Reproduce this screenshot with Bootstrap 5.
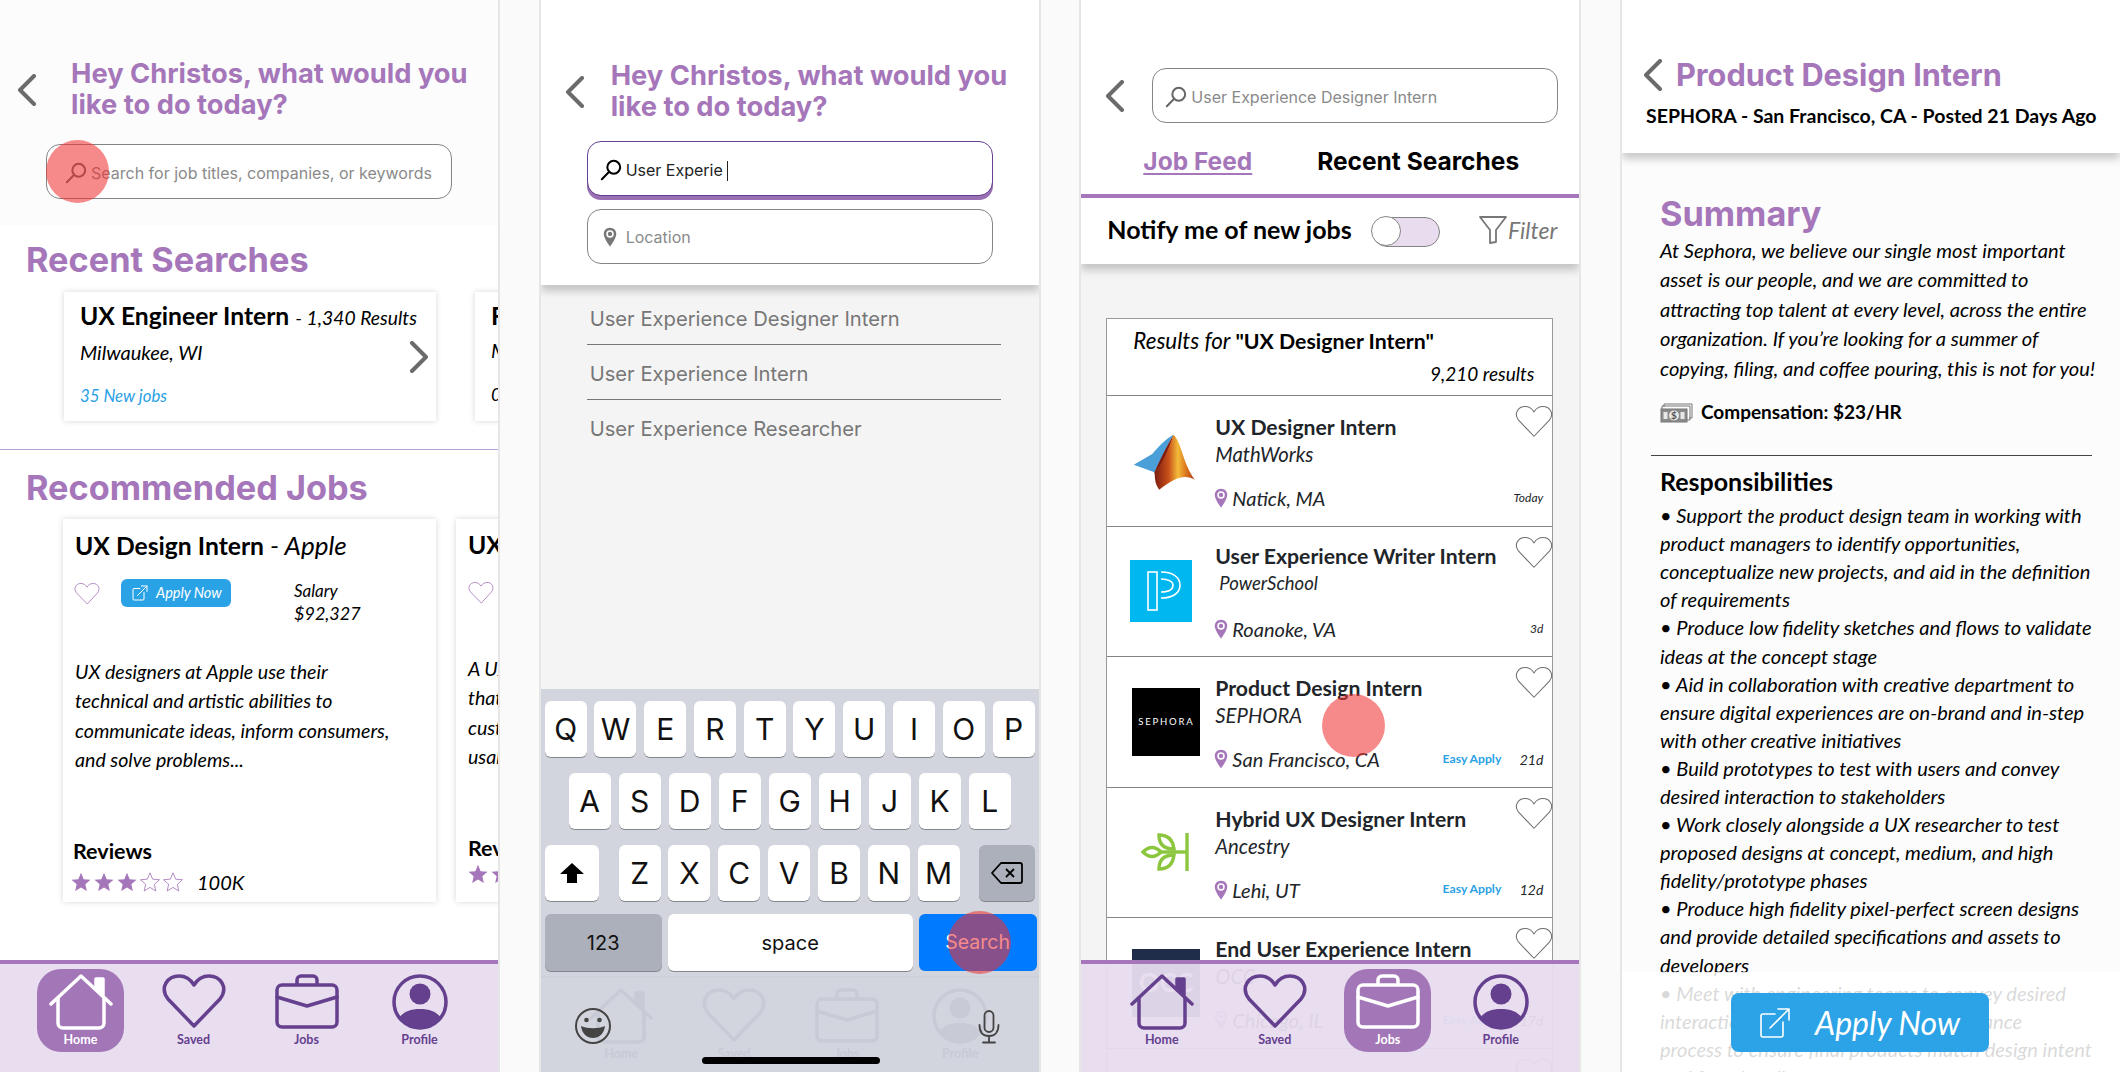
<!DOCTYPE html>
<html lang="en">

<head>
  <meta charset="UTF-8">
  <meta name="viewport" content="width=device-width, initial-scale=1.0">
  <title>Job search screens</title>
  <link href="https://cdn.jsdelivr.net/npm/bootstrap@5.3.0/dist/css/bootstrap.min.css" rel="stylesheet">
  <style>
    body {
      background-color: #fafafa;
      font-family: "Lato", "Liberation Sans", sans-serif;
      color: #000;
      overflow: hidden;
    }

    .screens {
      width: 2120px;
      height: 1072px;
    }

    .phone {
      width: 498px;
      height: 1072px;
      overflow: hidden;
      background-color: #fff;
      box-shadow: 0 0 0 2px #e6e6e6;
      font-size: 18px;
    }

    .phone-grey {
      background-color: #f4f4f4;
    }

    .phone-soft {
      background-color: #fcfcfc;
    }

    /* shared text */
    .mont {
      font-family: "Inter", "Liberation Sans", sans-serif;
    }

    .hero {
      color: #a576b9;
      font-family: "Inter", "Liberation Sans", sans-serif;
      font-weight: 700;
      font-size: 27.3px;
      line-height: 30.5px;
      white-space: nowrap;
    }

    .sect-title {
      color: #a576b9;
      font-family: "Inter", "Liberation Sans", sans-serif;
      font-weight: 700;
      font-size: 34.3px;
      line-height: 40px;
      white-space: nowrap;
      margin: 0;
    }

    .chev {
      width: 20px;
      height: 32px;
      flex: none;
      fill: none;
      stroke: #6b6b6b;
      stroke-width: 4;
      stroke-linecap: round;
      stroke-linejoin: round;
    }

    .line-icn {
      fill: none;
      stroke: currentColor;
      stroke-linecap: round;
      stroke-linejoin: round;
    }

    /* search boxes */
    .srch {
      width: 406px;
      height: 55px;
      padding: 2px 0 0 18px;
      border: 1.5px solid #858585;
      border-radius: 14px;
      font-family: "Inter", "Liberation Sans", sans-serif;
      font-size: 16px;
      color: #8a8a8a;
      background-color: #fff;
      white-space: nowrap;
    }

    .srch-tight {
      padding-left: 12px;
    }

    .srch-on {
      border-color: #67418f;
      color: #222;
      box-shadow: 0 4px 0 #9a70b5;
    }

    .srch-icn {
      width: 22px;
      height: 22px;
      flex: none;
      stroke-width: 2.2;
      color: #666;
    }

    .caret-bar {
      display: inline-block;
      width: 1px;
      height: 20px;
      background-color: #222;
      margin-left: 4px;
      vertical-align: middle;
    }

    /* cards of the home screen */
    .slide-card {
      flex: none;
      border: 0;
      border-radius: 0;
      box-shadow: 0 0 6px rgba(0, 0, 0, .16);
      background-color: #fff;
    }

    .recent-card {
      width: 372px;
      height: 129px;
      padding: 9px 0 0 16px;
    }

    .rec-card {
      width: 373px;
      height: 383px;
      padding: 11px 0 0 12px;
    }

    .cut-title {
      font-weight: 700;
      font-size: 24.7px;
      line-height: 30px;
      white-space: nowrap;
    }

    .cut-title i {
      font-weight: 400;
    }

    .cut-title .note {
      font-size: 19.3px;
    }

    .blue-link {
      color: #2aa1e6;
      font-style: italic;
      font-size: 16.8px;
      line-height: 22px;
    }

    .ital {
      font-style: italic;
      white-space: nowrap;
    }

    .city-line {
      font-size: 20px;
      line-height: 25px;
      margin-top: 7px;
    }

    .apply-small {
      width: 110px;
      height: 28px;
      padding: 0 0 0 11px;
      border: 0;
      border-radius: 6px;
      background-color: #2aa3e6;
      color: #fff;
      font-style: italic;
      font-size: 14.5px;
    }

    .star {
      width: 20px;
      height: 20px;
      margin-right: 3px;
      color: #a576b9;
      fill: #a576b9;
      flex: none;
    }

    .star-off {
      fill: none;
      stroke: #a576b9;
      stroke-width: 1;
    }

    .reviews-title {
      font-weight: 700;
      font-size: 21.5px;
      line-height: 26px;
    }

    /* bottom tabs */
    .tabbar {
      left: 0;
      right: 0;
      top: 960px;
      height: 112px;
      padding: 5px 0 0 24px;
      border-top: 4px solid #a576b9;
      background-color: rgba(232, 220, 238, .95);
      color: #65408f;
      z-index: 3;
    }

    .tab-item {
      width: 113px;
    }

    .tab-tile {
      width: 87px;
      height: 83px;
      padding-top: 5px;
      border-radius: 24px;
      font-weight: 700;
      font-size: 12.5px;
      line-height: 18px;
    }

    .tab-tile svg {
      width: 64px;
      height: 56px;
      stroke-width: 3.5;
      margin-bottom: 1px;
    }

    .tab-on {
      background-color: #a376b8;
      color: #fff;
    }

    .tabbar-ghost {
      top: 976px;
      border-top: 2px solid #ccd0d9;
      background-color: transparent;
      color: #c8cad6;
      z-index: 1;
    }

    /* keyboard */
    .kbd-panel {
      left: 0;
      right: 0;
      bottom: 0;
      height: 383px;
      padding-top: 12px;
      background-color: #d2d5dd;
      font-family: "Inter", "Liberation Sans", sans-serif;
    }

    .kbd-row {
      height: 56px;
      margin-bottom: 16px;
      position: relative;
      z-index: 2;
    }

    .kbd-key {
      width: 42px;
      height: 56px;
      background-color: #fff;
      border-radius: 6px;
      box-shadow: 0 1px 0 #85868b;
      font-size: 30px;
      color: #111;
    }

    .kbd-wide {
      font-size: 20px;
      height: 57px;
    }

    .kbd-dark {
      background-color: #abb0ba;
    }

    .kbd-go {
      background-color: #007aff;
      color: #fff;
      box-shadow: none;
    }

    .home-bar {
      left: 161px;
      bottom: 8px;
      width: 178px;
      height: 7px;
      border-radius: 4px;
      background-color: #000;
      z-index: 2;
    }

    .suggest {
      width: 414px;
      margin-left: 46px;
    }

    .suggest-item {
      height: 55px;
      padding: 9px 0 0 3px;
      border: 0;
      border-bottom: 1.5px solid #777;
      border-radius: 0;
      background-color: transparent;
      color: #777;
      font-family: "Inter", "Liberation Sans", sans-serif;
      font-size: 20.2px;
      line-height: 40px;
      white-space: nowrap;
    }

    .suggest-item:last-child {
      border-bottom: 0;
    }

    /* panel shadow under the top blocks */
    .top-block {
      background-color: #fff;
      box-shadow: 0 6px 8px rgba(0, 0, 0, .2);
      position: relative;
    }

    /* job feed */
    .feed-tabs {
      height: 74px;
      padding-top: 22px;
      border-bottom: 4px solid #a576b9;
      font-family: "Inter", "Liberation Sans", sans-serif;
      font-weight: 700;
      font-size: 24.5px;
      line-height: 30px;
      margin-top: 1px;
    }

    .feed-on {
      color: #a576b9;
      text-decoration: underline;
      text-underline-offset: 3px;
      margin-left: 62px;
      margin-right: 65px;
    }

    .notify-row {
      height: 67px;
      padding: 0 22px 3px 26px;
    }

    .notify-text {
      font-weight: 700;
      font-size: 25px;
      white-space: nowrap;
    }

    .fake-toggle {
      width: 68px;
      height: 30px;
      margin: 3px 0 0 20px;
      border: 1.5px solid #858585;
      border-radius: 15px;
      background-color: #e8dcee;
    }

    .toggle-knob {
      width: 30px;
      height: 30px;
      margin: -1.5px 0 0 -1.5px;
      border: 1.5px solid #858585;
      border-radius: 50%;
      background-color: #fff;
    }

    .filter-text {
      color: #777;
      font-style: italic;
      font-size: 23px;
    }

    .results-box {
      width: 447px;
      margin: 54px 0 0 25px;
      border: 1px solid #999;
      border-bottom: 0;
      border-radius: 0;
      background-color: #fff;
    }

    .results-head {
      height: 76px;
      padding: 6px 18px 0 26px;
      font-size: 19px;
      line-height: 32px;
    }

    .results-for {
      font-size: 22.4px;
    }

    .results-q {
      font-size: 21.3px;
    }

    .list-group-item.job-row {
      height: 130.5px;
      padding: 0;
      border: 0;
      border-top: 1.5px solid #858585;
      border-radius: 0;
    }

    .job-logo {
      width: 108px;
      flex: none;
      padding-left: 24px;
    }

    .job-body {
      padding-top: 17px;
    }

    .job-body-high {
      padding-top: 15px;
    }

    .job-name {
      font-weight: 700;
      font-size: 21.2px;
      line-height: 28px;
      white-space: nowrap;
    }

    .job-co {
      font-style: italic;
      font-size: 20.3px;
      line-height: 26px;
    }

    .job-meta {
      width: 330px;
      height: 28px;
      margin-top: 17px;
      font-style: italic;
      font-size: 20px;
    }

    .job-body-high .job-meta {
      margin-top: 19px;
    }

    .job-pin {
      width: 16px;
      height: 20px;
      margin: 0 3px 0 -2px;
      flex: none;
      color: #a576b9;
    }

    .easy {
      color: #2aa1e6;
      font-style: normal;
      font-weight: 700;
      font-size: 12.2px;
    }

    .age {
      width: 44px;
      padding-right: 2px;
      text-align: right;
      font-size: 12px;
    }

    .age-big {
      font-size: 14px;
    }

    .job-heart {
      top: 9px;
      right: -1px;
      width: 38px;
      height: 34px;
      color: #6f6f6f;
      stroke-width: 1.8;
    }

    .sephora-word {
      color: #fff;
      font-size: 9.5px;
      letter-spacing: 1.8px;
    }

    .occ-word {
      color: #fff;
      font-weight: 700;
      font-size: 26px;
    }

    /* job detail */
    .detail-head {
      height: 153px;
      padding: 59px 0 0 21px;
    }

    .detail-title {
      color: #a576b9;
      font-family: "Inter", "Liberation Sans", sans-serif;
      font-weight: 700;
      font-size: 30.7px;
      line-height: 32px;
      margin-left: -3px;
      white-space: nowrap;
    }

    .detail-sub {
      margin-top: 11px;
      margin-left: 3px;
      font-weight: 700;
      font-size: 19.5px;
      line-height: 28px;
      white-space: nowrap;
    }

    .detail-body {
      padding: 41px 0 0 38px;
    }

    .long-text {
      font-style: italic;
      font-size: 20.1px;
      line-height: 29.4px;
      white-space: nowrap;
      margin: 0;
    }

    .card-text-size {
      font-size: 19.6px;
    }

    .long-tight {
      line-height: 28.1px;
    }

    .comp-line {
      margin-top: 15px;
      font-weight: 700;
      font-size: 19px;
      line-height: 28px;
      white-space: nowrap;
    }

    .rule-dark {
      width: 441px;
      margin: 29px 0 10px -9px;
      border-top: 1.5px solid #444;
      opacity: 1;
    }

    .resp-title {
      font-weight: 700;
      font-size: 25px;
      line-height: 30px;
      margin: 0 0 5px;
    }

    .fade-over {
      left: 0;
      right: 0;
      top: 972px;
      bottom: 0;
      background-color: rgba(255, 255, 255, .85);
    }

    .apply-big {
      left: 109px;
      top: 21px;
      width: 258px;
      height: 59px;
      padding: 0 0 0 28px;
      border: 0;
      border-radius: 8px;
      background-color: #2ba3e6;
      color: #fff;
      font-style: italic;
      font-size: 32px;
      white-space: nowrap;
    }

    .tap-dot {
      width: 63px;
      height: 63px;
      border-radius: 50%;
      background-color: rgba(240, 50, 50, .57);
      z-index: 5;
    }
  </style>
</head>

<body>
  <svg width="0" height="0" class="position-absolute">
    <symbol id="i-home" viewBox="0 0 64 56">
      <path d="M2 30 L32 2 L62 30" />
      <path d="M9 24 V49 a5 5 0 0 0 5 5 H50 a5 5 0 0 0 5-5 V24" />
      <path d="M47 5 h7 v16 l-7 -6 Z" fill="currentColor" />
    </symbol>
    <symbol id="i-heart" viewBox="0 0 64 56">
      <path d="M32 52 L6 25 C-3 13 6 2 17 2 C24 2 29 6 32 11 C35 6 40 2 47 2 C58 2 67 13 58 25 Z" />
    </symbol>
    <symbol id="i-bag" viewBox="0 0 64 56">
      <rect x="2" y="11" width="60" height="42" rx="5" />
      <path d="M22 10 V6 a4 4 0 0 1 4-4 h12 a4 4 0 0 1 4 4 v4" />
      <path d="M2 23 L32 32 L62 23" />
    </symbol>
    <symbol id="i-user" viewBox="0 0 64 56">
      <circle cx="32" cy="28" r="26" />
      <circle cx="32" cy="20" r="10.5" fill="currentColor" stroke="none" />
      <path d="M11 44 C16 37 23 35 32 35 C41 35 48 37 53 44 A26 26 0 0 1 11 44 Z" fill="currentColor" stroke="none" />
    </symbol>
    <symbol id="i-glass" viewBox="0 0 24 24">
      <circle cx="15" cy="9" r="7" />
      <path d="M10 14 L2 22" />
    </symbol>
    <symbol id="i-pin" viewBox="0 0 24 32">
      <path d="M12 1 C6 1 2 5.5 2 11 C2 18 12 31 12 31 C12 31 22 18 22 11 C22 5.5 18 1 12 1 Z" fill="currentColor" stroke="none" />
      <circle cx="12" cy="11" r="6" fill="#fff" stroke="none" />
      <circle cx="12" cy="11" r="3.5" fill="currentColor" stroke="none" />
    </symbol>
    <symbol id="i-ext" viewBox="0 0 32 32">
      <path d="M16 7 H4 a2 2 0 0 0-2 2 V28 a2 2 0 0 0 2 2 H22 a2 2 0 0 0 2-2 V15" />
      <path d="M11 21 L30 2 M19 2 H30 V13" />
    </symbol>
    <symbol id="i-star" viewBox="0 0 24 24">
      <path d="M12 1 L15.2 8.6 L23.4 9.3 L17.2 14.7 L19 22.8 L12 18.5 L5 22.8 L6.8 14.7 L.6 9.3 L8.8 8.6 Z" />
    </symbol>
    <linearGradient id="peak" x1="0" y1="0" x2="1" y2="0">
      <stop offset="0" stop-color="#7c1c10" />
      <stop offset=".35" stop-color="#c9501a" />
      <stop offset=".58" stop-color="#f3bb3a" />
      <stop offset=".8" stop-color="#d9701c" />
      <stop offset="1" stop-color="#a83c16" />
    </linearGradient>
  </svg>

  <div class="screens d-flex justify-content-between">

    <!-- Home screen -->
    <section class="phone position-relative">
      <div class="phone-soft" style="height: 225px">
        <div class="d-flex align-items-center" style="padding: 59px 0 0 17px">
          <svg class="chev" viewBox="0 0 20 32"><path d="M17 2 L3 16 L17 30" /></svg>
          <div class="hero" style="margin-left: 34px">Hey Christos, what would you<br>like to do today?</div>
        </div>
        <div class="srch form-control d-flex align-items-center gap-1" style="margin: 24px 0 0 46px">
          <svg class="srch-icn line-icn"><use href="#i-glass" /></svg>
          <span>Search for job titles, companies, or keywords</span>
        </div>
      </div>

      <h2 class="sect-title" style="margin: 15px 0 12px 26px">Recent Searches</h2>
      <div class="d-flex" style="padding-left: 64px; gap: 39px">
        <div class="card slide-card recent-card position-relative">
          <div class="cut-title">UX Engineer Intern <i class="note">- 1,340 Results</i></div>
          <div class="ital city-line">Milwaukee, WI</div>
          <div class="blue-link" style="margin-top: 20px">35 New jobs</div>
          <svg class="chev position-absolute" style="right: 7px; top: 49px" viewBox="0 0 20 32"><path d="M3 2 L17 16 L3 30" /></svg>
        </div>
        <div class="card slide-card recent-card">
          <div class="cut-title">Front End</div>
          <div class="ital city-line">Milwaukee, WI</div>
          <div class="ital" style="margin-top: 20px; line-height: 22px">0 New jobs</div>
        </div>
      </div>

      <div style="margin-top: 28px; border-top: 1px solid #b79fd0"></div>
      <h2 class="sect-title" style="margin: 18px 0 11px 26px">Recommended Jobs</h2>
      <div class="d-flex" style="padding-left: 63px; gap: 20px">
        <div class="card slide-card rec-card">
          <div class="cut-title">UX Design Intern <i style="font-size: 26px">- Apple</i></div>
          <div class="d-flex" style="margin-top: 18px; height: 48px">
            <svg class="line-icn" width="26" height="24" style="color: #a576b9; stroke-width: 2; margin: 3px 0 0 -1px"><use href="#i-heart" /></svg>
            <button class="btn apply-small d-flex align-items-center gap-2" style="margin-left: 21px">
              <svg class="line-icn" width="16" height="16" style="stroke-width: 2"><use href="#i-ext" /></svg>Apply Now
            </button>
            <div class="ital" style="margin-left: 63px; font-size: 17px; line-height: 22px; padding-top: 1px">Salary<br><span style="font-size: 18px">$92,327</span></div>
          </div>
          <p class="long-text card-text-size" style="margin-top: 30px">UX designers at Apple use their<br>technical and artistic abilities to<br>communicate ideas, inform consumers,<br>and solve problems...</p>
          <div class="reviews-title" style="margin: 63px 0 0 -2px">Reviews</div>
          <div class="d-flex align-items-center" style="margin: 3px 0 0 -4px">
            <svg class="star"><use href="#i-star" /></svg>
            <svg class="star"><use href="#i-star" /></svg>
            <svg class="star"><use href="#i-star" /></svg>
            <svg class="star star-off"><use href="#i-star" /></svg>
            <svg class="star star-off"><use href="#i-star" /></svg>
            <span class="ital" style="font-size: 20px; margin-left: 11px">100K</span>
          </div>
        </div>
        <div class="card slide-card rec-card">
          <div class="cut-title">UX Designer</div>
          <div class="d-flex" style="margin-top: 18px; height: 48px">
            <svg class="line-icn" width="26" height="24" style="color: #a576b9; stroke-width: 2; margin: 3px 0 0 0"><use href="#i-heart" /></svg>
          </div>
          <p class="long-text card-text-size" style="margin-top: 28px">A UX designer<br>that creates<br>customer<br>usable</p>
          <div class="reviews-title" style="margin-top: 63px">Reviews</div>
          <div class="d-flex align-items-center" style="margin-top: 3px">
            <svg class="star"><use href="#i-star" /></svg>
            <svg class="star"><use href="#i-star" /></svg>
          </div>
        </div>
      </div>

      <div class="tabbar position-absolute d-flex">
        <div class="tab-item d-flex justify-content-center"><div class="tab-tile tab-on d-flex flex-column align-items-center"><svg class="line-icn"><use href="#i-home" /></svg>Home</div></div>
        <div class="tab-item d-flex justify-content-center"><div class="tab-tile d-flex flex-column align-items-center"><svg class="line-icn"><use href="#i-heart" /></svg>Saved</div></div>
        <div class="tab-item d-flex justify-content-center"><div class="tab-tile d-flex flex-column align-items-center"><svg class="line-icn"><use href="#i-bag" /></svg>Jobs</div></div>
        <div class="tab-item d-flex justify-content-center"><div class="tab-tile d-flex flex-column align-items-center"><svg class="line-icn"><use href="#i-user" /></svg>Profile</div></div>
      </div>
      <div class="tap-dot position-absolute" style="left: 46px; top: 140px"></div>
    </section>

    <!-- Typing a search -->
    <section class="phone phone-grey position-relative">
      <div class="top-block" style="height: 285px; padding-top: 61px">
        <div class="d-flex align-items-center" style="padding-left: 24px">
          <svg class="chev" viewBox="0 0 20 32"><path d="M17 2 L3 16 L17 30" /></svg>
          <div class="hero" style="margin-left: 26px">Hey Christos, what would you<br>like to do today?</div>
        </div>
        <div class="srch srch-on srch-tight form-control d-flex align-items-center gap-1" style="margin: 19px 0 0 46px">
          <svg class="srch-icn line-icn" style="color: #000"><use href="#i-glass" /></svg>
          <span>User Experie<span class="caret-bar"></span></span>
        </div>
        <div class="srch srch-tight form-control d-flex align-items-center" style="margin: 13px 0 0 46px; padding-top: 0">
          <svg class="line-icn" width="16" height="20" style="color: #777; margin: 0 8px 0 2px"><use href="#i-pin" /></svg>
          <span>Location</span>
        </div>
      </div>
      <div class="suggest list-group" style="margin-top: 5px">
        <div class="list-group-item suggest-item">User Experience Designer Intern</div>
        <div class="list-group-item suggest-item">User Experience Intern</div>
        <div class="list-group-item suggest-item">User Experience Researcher</div>
      </div>

      <div class="kbd-panel position-absolute">
        <div class="kbd-row d-flex justify-content-between" style="padding: 0 4px">
          <div class="kbd-key d-flex align-items-center justify-content-center">Q</div>
          <div class="kbd-key d-flex align-items-center justify-content-center">W</div>
          <div class="kbd-key d-flex align-items-center justify-content-center">E</div>
          <div class="kbd-key d-flex align-items-center justify-content-center">R</div>
          <div class="kbd-key d-flex align-items-center justify-content-center">T</div>
          <div class="kbd-key d-flex align-items-center justify-content-center">Y</div>
          <div class="kbd-key d-flex align-items-center justify-content-center">U</div>
          <div class="kbd-key d-flex align-items-center justify-content-center">I</div>
          <div class="kbd-key d-flex align-items-center justify-content-center">O</div>
          <div class="kbd-key d-flex align-items-center justify-content-center">P</div>
        </div>
        <div class="kbd-row d-flex justify-content-between" style="padding: 0 28px">
          <div class="kbd-key d-flex align-items-center justify-content-center">A</div>
          <div class="kbd-key d-flex align-items-center justify-content-center">S</div>
          <div class="kbd-key d-flex align-items-center justify-content-center">D</div>
          <div class="kbd-key d-flex align-items-center justify-content-center">F</div>
          <div class="kbd-key d-flex align-items-center justify-content-center">G</div>
          <div class="kbd-key d-flex align-items-center justify-content-center">H</div>
          <div class="kbd-key d-flex align-items-center justify-content-center">J</div>
          <div class="kbd-key d-flex align-items-center justify-content-center">K</div>
          <div class="kbd-key d-flex align-items-center justify-content-center">L</div>
        </div>
        <div class="kbd-row d-flex" style="padding: 0 4px">
          <div class="kbd-key d-flex align-items-center justify-content-center" style="width: 54px; margin-right: 20px">
            <svg width="26" height="22" viewBox="0 0 26 22"><path d="M13 1 L25 12 H18 V21 H8 V12 H1 Z" fill="#000" /></svg>
          </div>
          <div class="d-flex justify-content-between flex-grow-1">
            <div class="kbd-key d-flex align-items-center justify-content-center">Z</div>
            <div class="kbd-key d-flex align-items-center justify-content-center">X</div>
            <div class="kbd-key d-flex align-items-center justify-content-center">C</div>
            <div class="kbd-key d-flex align-items-center justify-content-center">V</div>
            <div class="kbd-key d-flex align-items-center justify-content-center">B</div>
            <div class="kbd-key d-flex align-items-center justify-content-center">N</div>
            <div class="kbd-key d-flex align-items-center justify-content-center">M</div>
          </div>
          <div class="kbd-key kbd-dark d-flex align-items-center justify-content-center" style="width: 56px; margin-left: 19px">
            <svg width="32" height="24" viewBox="0 0 32 24" fill="none" stroke="#000" stroke-width="1.8" stroke-linejoin="round"><path d="M10 2 H29 a2 2 0 0 1 2 2 V20 a2 2 0 0 1-2 2 H10 L1 12 Z" /><path d="M15 8 L23 16 M23 8 L15 16" /></svg>
          </div>
        </div>
        <div class="kbd-row d-flex" style="padding: 0 2px 0 4px; margin-top: -3px; gap: 6px">
          <div class="kbd-key kbd-wide kbd-dark d-flex align-items-center justify-content-center" style="width: 117px">123</div>
          <div class="kbd-key kbd-wide d-flex align-items-center justify-content-center" style="width: 245px">space</div>
          <div class="kbd-key kbd-wide kbd-go d-flex align-items-center justify-content-center mont" style="width: 118px; font-size: 19.5px">Search</div>
        </div>
      </div>
      <div class="tabbar tabbar-ghost position-absolute d-flex">
        <div class="tab-item d-flex justify-content-center"><div class="tab-tile d-flex flex-column align-items-center"><svg class="line-icn"><use href="#i-home" /></svg>Home</div></div>
        <div class="tab-item d-flex justify-content-center"><div class="tab-tile d-flex flex-column align-items-center"><svg class="line-icn"><use href="#i-heart" /></svg>Saved</div></div>
        <div class="tab-item d-flex justify-content-center"><div class="tab-tile d-flex flex-column align-items-center"><svg class="line-icn"><use href="#i-bag" /></svg>Jobs</div></div>
        <div class="tab-item d-flex justify-content-center"><div class="tab-tile d-flex flex-column align-items-center"><svg class="line-icn"><use href="#i-user" /></svg>Profile</div></div>
      </div>
      <svg class="position-absolute" style="left: 33px; top: 1007px; z-index: 2" width="38" height="38" viewBox="0 0 38 38">
        <circle cx="19" cy="19" r="17" fill="none" stroke="#444" stroke-width="2" />
        <circle cx="12.5" cy="13" r="2.3" fill="#444" />
        <circle cx="25.5" cy="13" r="2.3" fill="#444" />
        <path d="M7 19 C14 22 24 22 31 19 C30 27 25 31 19 31 C13 31 8 27 7 19 Z" fill="#444" />
      </svg>
      <svg class="position-absolute" style="left: 437px; top: 1010px; z-index: 2" width="22" height="34" viewBox="0 0 22 34" fill="none" stroke="#444" stroke-width="1.8" stroke-linecap="round">
        <rect x="6.5" y="1" width="9" height="21" rx="4.5" />
        <path d="M1.5 15 C1.5 22 5 26 11 26 C17 26 20.5 22 20.5 15 M11 26 V32 M5 32.5 H17" />
      </svg>
      <div class="home-bar position-absolute"></div>
      <div class="tap-dot position-absolute" style="left: 407px; top: 911px"></div>
    </section>

    <!-- Job feed -->
    <section class="phone phone-grey position-relative">
      <div class="top-block" style="height: 264px; padding-top: 68px">
        <div class="d-flex align-items-center" style="padding-left: 24px">
          <svg class="chev" viewBox="0 0 20 32"><path d="M17 2 L3 16 L17 30" /></svg>
          <div class="srch srch-tight form-control d-flex align-items-center gap-1" style="margin-left: 27px">
            <svg class="srch-icn line-icn"><use href="#i-glass" /></svg>
            <span>User Experience Designer Intern</span>
          </div>
        </div>
        <div class="feed-tabs d-flex">
          <span class="feed-on">Job Feed</span>
          <span>Recent Searches</span>
        </div>
        <div class="notify-row d-flex align-items-center">
          <span class="notify-text">Notify me of new jobs</span>
          <div class="fake-toggle"><div class="toggle-knob"></div></div>
          <div class="ms-auto d-flex align-items-center">
            <svg width="30" height="30" viewBox="0 0 30 30" fill="none" stroke="#777" stroke-width="1.8" stroke-linejoin="round"><path d="M2 2 H28 L18 15 V27 L12 28 V15 Z" /></svg>
            <span class="filter-text">Filter</span>
          </div>
        </div>
      </div>

      <div class="card results-box list-group">
        <div class="results-head">
          <div class="text-nowrap"><i class="results-for">Results for</i> <b class="results-q">"UX Designer Intern"</b></div>
          <div class="text-end"><i>9,210 results</i></div>
        </div>

        <div class="list-group-item job-row d-flex position-relative">
          <div class="job-logo d-flex align-items-center">
            <svg width="70" height="66" viewBox="25 20 220 205" style="margin: 2px 0 0 -2px">
              <path d="M40 131 L98 97 C118 75 140 50 165 37 C150 60 130 105 105 155 Z" fill="#4a9fd8" />
              <path d="M105 155 C120 120 145 70 165 37 C150 90 125 130 115 172 Z" fill="#7c1c10" />
              <path d="M165 37 C190 60 195 130 232 178 C200 160 170 170 120 210 C105 190 107 170 105 155 C130 130 150 80 165 37 Z" fill="url(#peak)" />
            </svg>
          </div>
          <div class="job-body">
            <div class="job-name">UX Designer Intern</div>
            <div class="job-co">MathWorks</div>
            <div class="job-meta d-flex align-items-center">
              <svg class="job-pin"><use href="#i-pin" /></svg><span>Natick, MA</span>
              <span class="age ms-auto">Today</span>
            </div>
          </div>
          <svg class="job-heart line-icn position-absolute"><use href="#i-heart" /></svg>
        </div>

        <div class="list-group-item job-row d-flex position-relative">
          <div class="job-logo d-flex align-items-center" style="padding-left: 23px">
            <svg width="62" height="62" viewBox="0 0 62 62" fill="none" stroke="#fff" stroke-width="1.6">
              <rect width="62" height="62" fill="#00b7f0" stroke="none" />
              <rect x="18" y="12" width="9" height="38" />
              <path d="M31 12 C45 12 50 19 50 25 C50 33 43 38 31 38" />
              <path d="M31 19 C39 19 43 22 43 25 C43 29 39 32 31 32" />
            </svg>
          </div>
          <div class="job-body job-body-high">
            <div class="job-name">User Experience Writer Intern</div>
            <div class="job-co ps-1" style="font-size: 18.5px">PowerSchool</div>
            <div class="job-meta d-flex align-items-center">
              <svg class="job-pin"><use href="#i-pin" /></svg><span>Roanoke, VA</span>
              <span class="age ms-auto">3d</span>
            </div>
          </div>
          <svg class="job-heart line-icn position-absolute"><use href="#i-heart" /></svg>
        </div>

        <div class="list-group-item job-row d-flex position-relative">
          <div class="job-logo d-flex align-items-center" style="padding-left: 25px">
            <div class="d-flex align-items-center justify-content-center" style="width: 68px; height: 68px; background-color: #000"><span class="sephora-word">SEPHORA</span></div>
          </div>
          <div class="job-body">
            <div class="job-name">Product Design Intern</div>
            <div class="job-co">SEPHORA</div>
            <div class="job-meta d-flex align-items-center">
              <svg class="job-pin"><use href="#i-pin" /></svg><span>San Francisco, CA</span>
              <span class="easy ms-auto">Easy Apply</span><span class="age age-big">21d</span>
            </div>
          </div>
          <svg class="job-heart line-icn position-absolute"><use href="#i-heart" /></svg>
        </div>

        <div class="list-group-item job-row d-flex position-relative">
          <div class="job-logo d-flex align-items-center" style="padding-left: 34px">
            <svg width="48" height="38" viewBox="0 0 48 38" fill="none" stroke="#8cc63f" stroke-width="3.4">
              <path d="M46 0 V38" />
              <path d="M46 19 H18" />
              <path d="M2 19 C8 13 14 13 20 19 C14 25 8 25 2 19 Z" />
              <path d="M18 2 C28 2 32 8 33 16 C24 16 18 12 18 2 Z" />
              <path d="M18 36 C28 36 32 30 33 22 C24 22 18 26 18 36 Z" />
            </svg>
          </div>
          <div class="job-body">
            <div class="job-name">Hybrid UX Designer Intern</div>
            <div class="job-co">Ancestry</div>
            <div class="job-meta d-flex align-items-center">
              <svg class="job-pin"><use href="#i-pin" /></svg><span>Lehi, UT</span>
              <span class="easy ms-auto">Easy Apply</span><span class="age age-big">12d</span>
            </div>
          </div>
          <svg class="job-heart line-icn position-absolute"><use href="#i-heart" /></svg>
        </div>

        <div class="list-group-item job-row d-flex position-relative">
          <div class="job-logo d-flex align-items-center" style="padding-left: 25px">
            <div class="d-flex align-items-center justify-content-center" style="width: 68px; height: 68px; background: #1f2d4a"><span class="occ-word">OCC</span></div>
          </div>
          <div class="job-body">
            <div class="job-name">End User Experience Intern</div>
            <div class="job-co">OCC</div>
            <div class="job-meta d-flex align-items-center">
              <svg class="job-pin"><use href="#i-pin" /></svg><span>Chicago, IL</span>
              <span class="easy ms-auto">Easy Apply</span><span class="age age-big">17d</span>
            </div>
          </div>
          <svg class="job-heart line-icn position-absolute"><use href="#i-heart" /></svg>
        </div>

        <div class="list-group-item job-row d-flex position-relative">
          <svg class="job-heart line-icn position-absolute"><use href="#i-heart" /></svg>
        </div>
      </div>

      <div class="tabbar position-absolute d-flex">
        <div class="tab-item d-flex justify-content-center"><div class="tab-tile d-flex flex-column align-items-center"><svg class="line-icn"><use href="#i-home" /></svg>Home</div></div>
        <div class="tab-item d-flex justify-content-center"><div class="tab-tile d-flex flex-column align-items-center"><svg class="line-icn"><use href="#i-heart" /></svg>Saved</div></div>
        <div class="tab-item d-flex justify-content-center"><div class="tab-tile tab-on d-flex flex-column align-items-center"><svg class="line-icn"><use href="#i-bag" /></svg>Jobs</div></div>
        <div class="tab-item d-flex justify-content-center"><div class="tab-tile d-flex flex-column align-items-center"><svg class="line-icn"><use href="#i-user" /></svg>Profile</div></div>
      </div>
      <div class="tap-dot position-absolute" style="left: 241px; top: 694px"></div>
    </section>

    <!-- Job detail -->
    <section class="phone phone-soft position-relative">
      <div class="top-block detail-head">
        <div class="d-flex align-items-center gap-3">
          <svg class="chev" viewBox="0 0 20 32"><path d="M17 2 L3 16 L17 30" /></svg>
          <div class="detail-title">Product Design Intern</div>
        </div>
        <div class="detail-sub">SEPHORA - San Francisco, CA - Posted 21 Days Ago</div>
      </div>
      <div class="detail-body">
        <h2 class="sect-title">Summary</h2>
        <p class="long-text" style="margin-top: 2px">At Sephora, we believe our single most important<br>asset is our people, and we are committed to<br>attracting top talent at every level, across the entire<br>organization. If you’re looking for a summer of<br>copying, filing, and coffee pouring, this is not for you!</p>
        <div class="comp-line d-flex align-items-center gap-2">
          <svg width="33" height="21" viewBox="0 0 33 21" fill="none" stroke="#777">
            <path d="M4 5 V2 H32 V16 H29 M2 7 V4 H30 V18 H27" stroke-width="1" />
            <rect x="1" y="7" width="26" height="13" fill="#8a8a8a" stroke="#777" />
            <circle cx="14" cy="13.5" r="5" fill="#e8e8e8" stroke="none" />
            <rect x="3.5" y="10" width="4" height="7" fill="#e8e8e8" stroke="none" />
            <rect x="20.5" y="10" width="4" height="7" fill="#e8e8e8" stroke="none" />
            <text x="14" y="17" text-anchor="middle" font-size="10" fill="#555" stroke="none" font-family="Lato">$</text>
          </svg>
          Compensation: $23/HR
        </div>
        <hr class="rule-dark">
        <h3 class="resp-title">Responsibilities</h3>
        <p class="long-text long-tight">• Support the product design team in working with<br>product managers to identify opportunities,<br>conceptualize new projects, and aid in the definition<br>of requirements<br>• Produce low fidelity sketches and flows to validate<br>ideas at the concept stage<br>• Aid in collaboration with creative department to<br>ensure digital experiences are on-brand and in-step<br>with other creative initiatives<br>• Build prototypes to test with users and convey<br>desired interaction to stakeholders<br>• Work closely alongside a UX researcher to test<br>proposed designs at concept, medium, and high<br>fidelity/prototype phases<br>• Produce high fidelity pixel-perfect screen designs<br>and provide detailed specifications and assets to<br>developers<br>• Meet with engineering teams to convey desired<br>interaction and work with quality assurance<br>process to ensure final products match design intent<br>and functionality</p>
      </div>
      <div class="fade-over position-absolute">
        <button class="btn apply-big position-absolute d-flex align-items-center">
          <svg class="line-icn me-4" width="32" height="32" style="stroke-width: 1.6; flex: none"><use href="#i-ext" /></svg>Apply Now
        </button>
      </div>
    </section>
  </div>

  <script src="https://cdn.jsdelivr.net/npm/bootstrap@5.3.0/dist/js/bootstrap.bundle.min.js"></script>
</body>

</html>
